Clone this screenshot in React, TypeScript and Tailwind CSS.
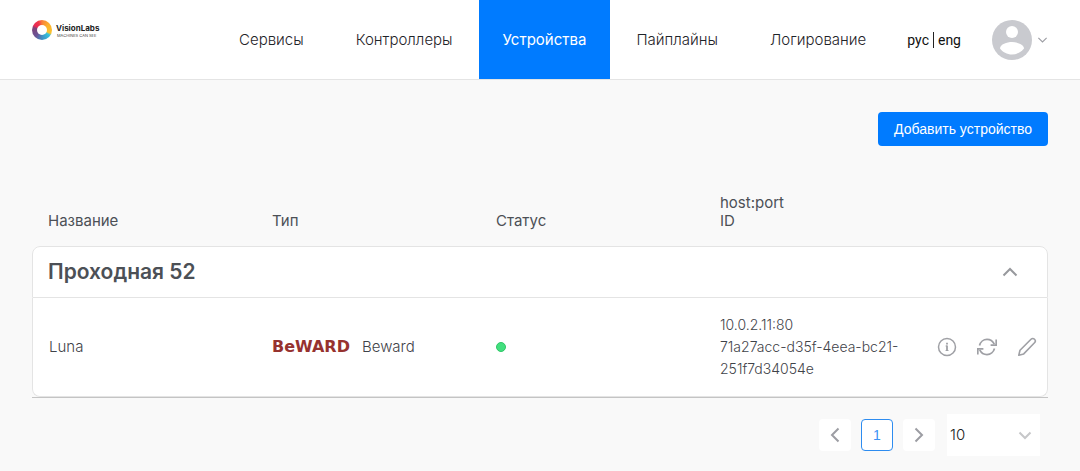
import { useState } from "react";
import clsx from "clsx";

const navItems = [
  { label: "Сервисы", href: "#services" },
  { label: "Контроллеры", href: "#controllers" },
  { label: "Устройства", href: "#devices", active: true },
  { label: "Пайплайны", href: "#pipelines" },
  { label: "Логирование", href: "#logs" },
];

const groups = [
  {
    name: "Проходная 52",
    devices: [
      {
        name: "Luna",
        type: "Beward",
        host: "10.0.2.11:80",
        id: "71a27acc-d35f-4eea-bc21-251f7d34054e",
      },
    ],
  },
];

type ChevronProps = {
  d: string;
  className: string;
  width?: number;
};

const Chevron = ({ d, className, width = 2 }: ChevronProps) => (
  <svg
    viewBox="0 0 16 16"
    fill="none"
    stroke="currentColor"
    strokeWidth={width}
    className={className}
    aria-hidden="true"
  >
    <path d={d} />
  </svg>
);

const Logo = () => (
  <a href="#home" className="mt-5 flex shrink-0 items-center gap-1 self-start">
    <span className="flex size-5 items-center justify-center rounded-full bg-[conic-gradient(#f8803a,#fbb02d_50deg,#fbc22e_110deg,#35c3dc_125deg,#3f8fc4_180deg,#6b5496_225deg,#7d4379_285deg,#e92a55_300deg,#f0364b_335deg,#f8803a)]">
      <span className="size-[10px] rounded-full bg-white" />
    </span>
    <span className="flex flex-col text-[#222]">
      <span className="text-[8px] leading-[10px] font-bold">VisionLabs</span>
      <span className="pl-px text-[4px] leading-[5px] text-[#444]">MACHINES CAN SEE</span>
    </span>
  </a>
);

const NavBar = () => (
  <header className="flex h-20 items-center justify-between border-b border-[#e4e4e4] bg-white px-8">
    <Logo />
    <div className="flex h-full items-center">
      <nav className="flex h-full">
        {navItems.map((item) => (
          <a
            key={item.label}
            href={item.href}
            className={clsx(
              "flex items-center pt-0.5 text-[15px]",
              item.active ? "bg-[#007bff] px-6 text-white" : "px-[26px] font-light text-[#1f2429]"
            )}
          >
            {item.label}
          </a>
        ))}
      </nav>
      <div className="ml-[15px] flex items-center text-sm text-[#111] [font-family:Roboto,sans-serif]">
        <button type="button" className="pr-1">рус</button>
        <button type="button" className="border-l border-[#222] pl-1 leading-4">eng</button>
      </div>
      <button type="button" aria-label="Профиль" className="ml-[31px] flex items-center gap-[5px] text-[#c9cacf]">
        <svg viewBox="0 0 40 40" className="size-10" aria-hidden="true">
          <circle cx="20" cy="20" r="20" fill="currentColor" />
          <circle cx="20" cy="12" r="6" fill="#fff" />
          <path d="M8 28.400C8 24.400 15 22 20 22s12 2.400 12 6.400C29.400 32 25 34.400 20 34.400S10.600 32 8 28.400z" fill="#fff" />
        </svg>
        <Chevron d="M2 5.500l6 6 6-6" width={1.6} className="size-[11px] text-[#9c9da3]" />
      </button>
    </div>
  </header>
);

const InfoIcon = () => (
  <svg viewBox="0 0 20 20" fill="none" stroke="currentColor" strokeWidth="1.500" className="size-5" aria-hidden="true">
    <circle cx="10" cy="10" r="8.500" />
    <path d="M8.600 9h1.400M8.600 13.500h2.900" strokeWidth="1" />
    <path d="M10 8.500v5.200M10 5.800v1.600" strokeWidth="1.800" />
  </svg>
);

const RefreshIcon = () => (
  <svg viewBox="0 0 20 20" fill="none" stroke="currentColor" strokeWidth="1.700" className="size-5" aria-hidden="true">
    <path d="M2.500 8.500C3.400 5 6.500 2.400 10 2.400c3.200 0 5.800 1.700 7.300 4.700M17.500 11.500c-.9 3.500-4 6.100-7.500 6.100-3.200 0-5.800-1.700-7.300-4.700" />
    <path d="M19.200 2.500v5.600h-5.600M.8 17.500v-5.600h5.600" />
  </svg>
);

const PencilIcon = () => (
  <svg viewBox="0 0 20 20" fill="none" stroke="currentColor" strokeWidth="1.600" strokeLinejoin="round" className="size-5" aria-hidden="true">
    <path d="M1.800 18.300l1.200-5L14 2.300c1-1 2.500-1 3.500 0s1 2.500 0 3.500L6.700 16.900z" />
  </svg>
);

const DeviceTable = () => {
  const [open, setOpen] = useState(true);

  return (
    <div className="border-b border-[#c4c4c4]">
      <table className="w-full table-fixed border-separate border-spacing-0 text-left">
        <colgroup>
          <col className="w-60" />
          <col className="w-56" />
          <col className="w-56" />
          <col />
          <col className="w-32" />
        </colgroup>
        <thead className="align-bottom text-[15px] leading-[18px] text-[#4c5056]">
          <tr>
            <th className="pb-4 pl-4 font-normal">Название</th>
            <th className="pb-4 font-normal">Тип</th>
            <th className="pb-4 font-normal">Статус</th>
            <th className="pb-4 font-normal">host:port<br />ID</th>
            <td />
          </tr>
        </thead>
        {groups.map((group) => (
          <tbody key={group.name} className="bg-white">
            <tr>
              <th
                colSpan={5}
                scope="rowgroup"
                className="h-[52px] rounded-t-lg border border-[#e4e4e4] bg-white pr-[29px] pl-[15px] text-[#4c5056]"
              >
                <div className="flex items-center justify-between">
                  <h2 className="text-[21px] leading-6 font-semibold">{group.name}</h2>
                  <button type="button" aria-label="Свернуть" aria-expanded={open} onClick={() => setOpen(!open)}>
                    <Chevron
                      d={open ? "M1.500 11.500L8 5l6.500 6.500" : "M1.500 5L8 11.500 14.500 5"}
                      className="size-4 text-[#97999d]"
                    />
                  </button>
                </div>
              </th>
            </tr>
            {open &&
              group.devices.map((device) => (
                <tr key={device.id} className="text-[15px] leading-[22px] font-light text-[#3f4349]">
                  <td className="rounded-bl-lg border-b border-l border-[#e4e4e4] bg-white py-4 pl-4">{device.name}</td>
                  <td className="border-b border-[#e4e4e4]">
                    <div className="flex items-center gap-3">
                      <span className="text-base leading-5 font-bold text-[#96322f] [font-family:'DejaVu_Sans',sans-serif]" aria-hidden="true">
                        BeWARD
                      </span>
                      {device.type}
                    </div>
                  </td>
                  <td className="border-b border-[#e4e4e4]">
                    <span role="img" aria-label="В сети" className="block size-[10px] rounded-full border border-[#2fc767] bg-[#42df7e]" />
                  </td>
                  <td className="border-b border-[#e4e4e4] py-4 text-sm leading-[22px]">
                    {device.host}
                    <br />
                    {device.id}
                  </td>
                  <td className="rounded-br-lg border-r border-b border-[#e4e4e4] bg-white pr-[10px]">
                    <div className="flex justify-end gap-5 text-[#9fa0a5]">
                      <button type="button" aria-label="Информация"><InfoIcon /></button>
                      <button type="button" aria-label="Перезапустить"><RefreshIcon /></button>
                      <button type="button" aria-label="Редактировать"><PencilIcon /></button>
                    </div>
                  </td>
                </tr>
              ))}
          </tbody>
        ))}
      </table>
    </div>
  );
};

const Pagination = () => (
  <div className="mt-4 flex items-center justify-end gap-3 pr-2">
    <div className="flex gap-[10px]">
      <button type="button" aria-label="Назад" className="flex size-8 items-center justify-center rounded bg-white text-[#9c9da3]">
        <Chevron d="M11.500 1.500L5 8l6.500 6.500" className="size-4" />
      </button>
      <button type="button" className="size-8 rounded border border-[#2d8cf0] bg-white text-sm text-[#3b93f5] [font-family:'Liberation_Sans',sans-serif]">
        1
      </button>
      <button type="button" aria-label="Вперёд" className="flex size-8 items-center justify-center rounded bg-white text-[#9c9da3]">
        <Chevron d="M4.500 1.500L11 8l-6.500 6.500" className="size-4" />
      </button>
    </div>
    <div className="relative">
      <select
        aria-label="Строк на странице"
        defaultValue="10"
        className="h-[42px] w-[93px] appearance-none bg-white pl-[3px] text-[15px] font-light text-[#222]"
      >
        <option>10</option>
        <option>25</option>
        <option>50</option>
      </select>
      <Chevron d="M2.500 5.500L8 11l5.500-5.500" className="pointer-events-none absolute top-[13px] right-[7px] size-4 text-[#c6c7c9]" />
    </div>
  </div>
);

const App = () => {
  return (
    <div className="min-h-screen bg-[#f9f9f9] [font-family:Inter,sans-serif]">
      <NavBar />
      <main className="px-8 pt-8 pb-3">
        <div className="mb-12 flex justify-end">
          <button
            type="button"
            className="h-[34px] rounded bg-[#007bff] px-4 text-sm text-white [font-family:'Liberation_Sans',sans-serif]"
          >
            Добавить устройство
          </button>
        </div>
        <DeviceTable />
        <Pagination />
      </main>
    </div>
  );
};

export default App;
